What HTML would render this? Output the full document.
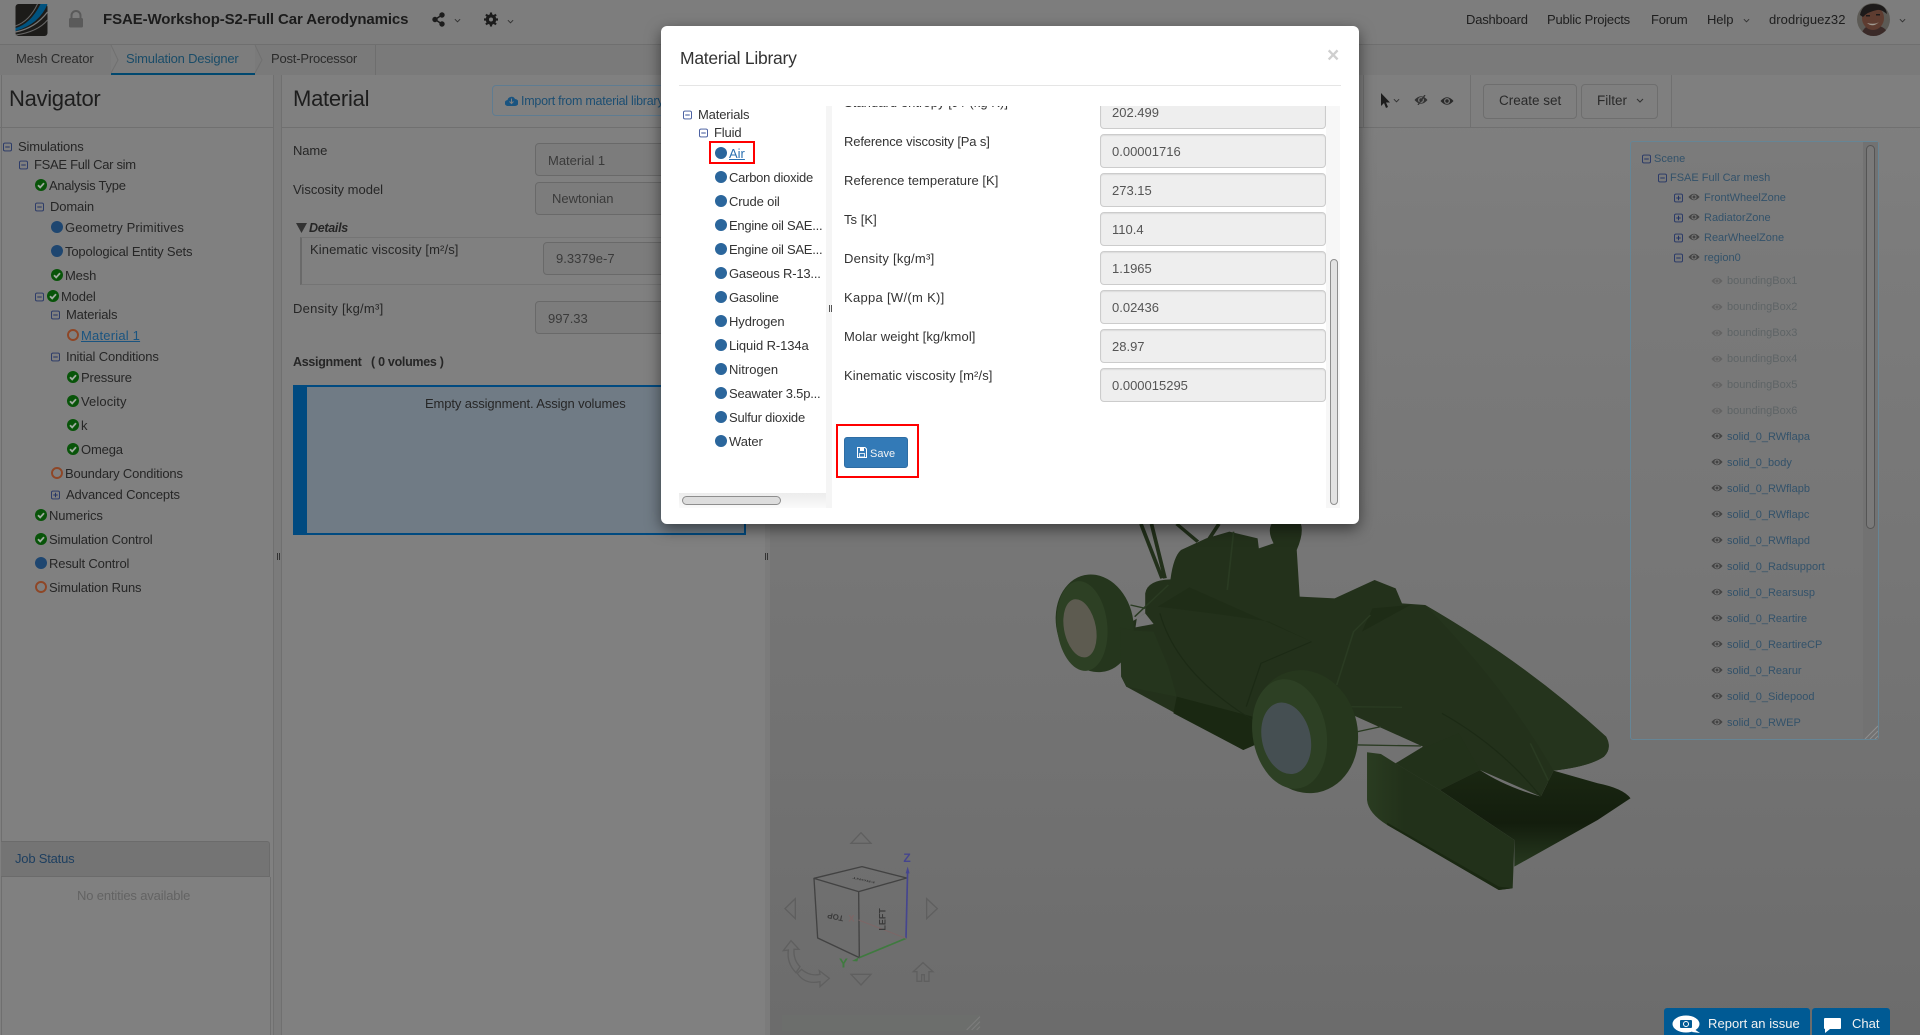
<!DOCTYPE html>
<html><head><meta charset="utf-8"><title>Material Library</title>
<style>
html,body{margin:0;padding:0;width:1920px;height:1035px;overflow:hidden;background:#808080;font-family:"Liberation Sans",sans-serif;font-size:13px;color:#262626}
.a{position:absolute}
.t{position:absolute;white-space:nowrap;line-height:16px;transform:translateY(calc(-50% + 1px))}
.n{letter-spacing:-.15px}
.i{position:absolute;transform:translateY(-50%)}
.inp{position:absolute;box-sizing:border-box;background:#7c7c7c;border:1px solid #696969;border-radius:4px}
.ro{position:absolute;box-sizing:border-box;left:1100px;width:226px;height:34px;background:#eee;border:1px solid #ccc;border-radius:4px;color:#555;line-height:34px;padding-left:11px;box-shadow:inset 0 1px 1px rgba(0,0,0,.075)}
.m{color:#333}
.e{color:#33526a;font-size:11px}
.g{color:#5e6466;font-size:11px}
.k{color:#1e1e1e}
</style></head><body>
<svg width="0" height="0" style="position:absolute">
<symbol id="chk" viewBox="0 0 12 12"><circle cx="6" cy="6" r="6" fill="#085409"/><path d="M3 6.200 5.200 8.400 9 4.200" fill="none" stroke="#a0aca0" stroke-width="1.800"/></symbol>
<symbol id="blu" viewBox="0 0 12 12"><circle cx="6" cy="6" r="6" fill="#1e4670"/></symbol>
<symbol id="blm" viewBox="0 0 12 12"><circle cx="6" cy="6" r="6" fill="#2b669c"/></symbol>
<symbol id="org" viewBox="0 0 12 12"><circle cx="6" cy="6" r="5" fill="none" stroke="#8e4626" stroke-width="1.900"/></symbol>
<symbol id="mn" viewBox="0 0 10 10"><rect x=".6" y=".6" width="8.800" height="8.800" rx="1.500" fill="none" stroke="#243566"/><path d="M2.500 5h5" stroke="#243566" stroke-width="1.100"/></symbol>
<symbol id="pl" viewBox="0 0 10 10"><rect x=".6" y=".6" width="8.800" height="8.800" rx="1.500" fill="none" stroke="#243566"/><path d="M2.500 5h5M5 2.500v5" stroke="#243566" stroke-width="1.100"/></symbol>
<symbol id="mnm" viewBox="0 0 10 10"><rect x=".6" y=".6" width="8.800" height="8.800" rx="1.500" fill="none" stroke="#3a5298"/><path d="M2.500 5h5" stroke="#3a5298" stroke-width="1.100"/></symbol>
<symbol id="eye" viewBox="0 0 14 10"><path d="M.5 5Q7-2.500 13.500 5 7 12.500.5 5Z" fill="currentColor"/><circle cx="7" cy="5" r="3" fill="#777"/><circle cx="7" cy="5" r="1.700" fill="currentColor"/></symbol>
<symbol id="car" viewBox="0 0 8 5"><path d="M1 1 4 4 7 1" fill="none" stroke="currentColor" stroke-width="1.100"/></symbol>
</svg>

<!-- header -->
<div class="a" style="left:0;top:0;width:1920px;height:44px;background:#7d7d7d;border-bottom:1px solid #6f6f6f"></div>
<svg class="a" style="left:15px;top:4px" width="33" height="32" viewBox="0 0 32 32"><rect width="32" height="32" rx="3" fill="#1c1b19"/><path d="M0 24Q15 20 25 0H32Q24 20 0 27Z" fill="#00527f"/><path d="M0 22Q14 17 22 0" fill="none" stroke="#666" stroke-width="1"/><path d="M0 28Q20 24 32 8" fill="none" stroke="#777" stroke-width="1.300"/><path d="M0 31Q22 28 32 16" fill="none" stroke="#666" stroke-width="1"/></svg>
<svg class="a" style="left:68px;top:10px" width="16" height="18" viewBox="0 0 16 18"><path d="M3.500 8V5.500a4.500 4.500 0 0 1 9 0V8" fill="none" stroke="#5a5a5a" stroke-width="2"/><rect x="1" y="8" width="14" height="9.500" rx="1.500" fill="#5a5a5a"/></svg>
<div class="t" style="left:103px;top:19px;font-size:15px;font-weight:bold;color:#1c1c1c;letter-spacing:-.1px">FSAE-Workshop-S2-Full Car Aerodynamics</div>
<svg class="a" style="left:432px;top:12px" width="13" height="15" viewBox="0 0 13 15" fill="#1c1c1c"><circle cx="3" cy="7.500" r="2.700"/><circle cx="10" cy="3" r="2.700"/><circle cx="10" cy="12" r="2.700"/><path d="M3 7.500 10 3M3 7.500 10 12" stroke="#1c1c1c" stroke-width="1.500"/></svg>
<svg class="a" style="left:454px;top:18px;color:#333" width="7" height="5"><use href="#car"/></svg>
<svg class="a" style="left:484px;top:12px" width="14" height="15" viewBox="0 0 14 14"><circle cx="7" cy="7" r="3.800" fill="none" stroke="#1c1c1c" stroke-width="3"/><path d="M7 0V14M0 7H14M2 2 12 12M12 2 2 12" stroke="#1c1c1c" stroke-width="2.200"/><circle cx="7" cy="7" r="2" fill="#7d7d7d"/></svg>
<svg class="a" style="left:507px;top:19px;color:#333" width="7" height="5"><use href="#car"/></svg>
<div class="t k" style="left:1466px;top:19px;letter-spacing:-.2px">Dashboard</div>
<div class="t k" style="left:1547px;top:19px;letter-spacing:-.2px">Public Projects</div>
<div class="t k" style="left:1651px;top:19px;letter-spacing:-.2px">Forum</div>
<div class="t k" style="left:1707px;top:19px;letter-spacing:-.1px">Help</div>
<svg class="a" style="left:1743px;top:18px;color:#333" width="7" height="5"><use href="#car"/></svg>
<div class="t k" style="left:1769px;top:19px;letter-spacing:.05px">drodriguez32</div>
<svg class="a" style="left:1857px;top:3px" width="33" height="33" viewBox="0 0 33 33"><defs><clipPath id="av"><circle cx="16.500" cy="16.500" r="16.500"/></clipPath></defs><g clip-path="url(#av)"><rect width="33" height="33" fill="#5c5a55"/><path d="M4 33Q6 24 12 23H22Q30 25 32 33Z" fill="#3a2a28"/><ellipse cx="16" cy="15" rx="11" ry="12" fill="#5e3c30"/><path d="M3 12Q5 1 16 1 29 1 30 11 24 6 20 7 10 9 6 14Z" fill="#1d1a1a"/><path d="M10 20Q16 25 22 19 18 22 10 20Z" fill="#a09a90"/><rect x="9" y="12" width="4" height="1.500" fill="#1d1a1a"/><rect x="19" y="11" width="4" height="1.500" fill="#1d1a1a"/></g></svg>
<svg class="a" style="left:1899px;top:18px;color:#333" width="7" height="5"><use href="#car"/></svg>

<!-- tabs -->
<div class="a" style="left:0;top:45px;width:1920px;height:30px;background:#7a7a7a"></div>
<div class="a" style="left:111px;top:45px;width:144px;height:28px;background:#7d7d7d;border-bottom:2px solid #00486f"></div>
<div class="a" style="left:375px;top:45px;width:1px;height:30px;background:#6e6e6e"></div>
<svg class="a" style="left:108px;top:45px" width="270" height="30" fill="none" stroke="#707070"><path d="M3 0 10 15 3 28M147 0 154 15 147 28"/></svg>
<div class="t" style="left:16px;top:58px;color:#2b2b2b;letter-spacing:-.1px">Mesh Creator</div>
<div class="t" style="left:126px;top:58px;color:#1a4c68;letter-spacing:-.2px">Simulation Designer</div>
<div class="t" style="left:271px;top:58px;color:#2b2b2b;letter-spacing:-.2px">Post-Processor</div>

<!-- panels -->
<div class="a" style="left:1px;top:75px;width:272px;height:960px;background:#808080;border-left:1px solid #6f6f6f;box-sizing:border-box"></div>
<div class="a" style="left:273px;top:75px;width:9px;height:960px;background:#7b7b7b;border-left:1px solid #707070;border-right:1px solid #707070;box-sizing:border-box"></div>
<div class="a" style="left:282px;top:75px;width:483px;height:960px;background:#808080"></div>
<div class="a" style="left:765px;top:75px;width:5px;height:960px;background:#7b7b7b"></div>
<div class="a" style="left:0;top:127px;width:273px;height:1px;background:#707070"></div>
<div class="a" style="left:282px;top:127px;width:483px;height:1px;background:#707070"></div>
<div class="a" style="left:277px;top:553px;width:1px;height:7px;background:#333;box-shadow:2px 0 0 #333"></div>
<div class="a" style="left:765px;top:553px;width:1px;height:7px;background:#333;box-shadow:2px 0 0 #333"></div>
<div class="t" style="left:9px;top:98px;font-size:22px;line-height:28px;color:#1d1d1d;letter-spacing:-.3px">Navigator</div>
<div class="t" style="left:293px;top:98px;font-size:22px;line-height:28px;color:#1d1d1d;letter-spacing:-.25px">Material</div>

<!-- nav tree -->
<svg class="i" style="left:3px;top:147px" width="9" height="9"><use href="#mn"/></svg><div class="t n" style="left:18px;top:146px">Simulations</div>
<svg class="i" style="left:19px;top:165px" width="9" height="9"><use href="#mn"/></svg><div class="t n" style="left:34px;top:164px;letter-spacing:-.3px">FSAE Full Car sim</div>
<svg class="i" style="left:35px;top:185px" width="12" height="12"><use href="#chk"/></svg><div class="t n" style="left:49px;top:185px;letter-spacing:-.25px">Analysis Type</div>
<svg class="i" style="left:35px;top:207px" width="9" height="9"><use href="#mn"/></svg><div class="t n" style="left:50px;top:206px">Domain</div>
<svg class="i" style="left:51px;top:227px" width="12" height="12"><use href="#blu"/></svg><div class="t n" style="left:65px;top:227px;letter-spacing:.1px">Geometry Primitives</div>
<svg class="i" style="left:51px;top:251px" width="12" height="12"><use href="#blu"/></svg><div class="t n" style="left:65px;top:251px">Topological Entity Sets</div>
<svg class="i" style="left:51px;top:275px" width="12" height="12"><use href="#chk"/></svg><div class="t n" style="left:65px;top:275px">Mesh</div>
<svg class="i" style="left:35px;top:297px" width="9" height="9"><use href="#mn"/></svg><svg class="i" style="left:47px;top:296px" width="12" height="12"><use href="#chk"/></svg><div class="t n" style="left:61px;top:296px">Model</div>
<svg class="i" style="left:51px;top:315px" width="9" height="9"><use href="#mn"/></svg><div class="t n" style="left:66px;top:314px">Materials</div>
<svg class="i" style="left:67px;top:335px" width="12" height="12"><use href="#org"/></svg><div class="t" style="left:81px;top:335px;letter-spacing:.2px;color:#1a5480;text-decoration:underline">Material 1</div>
<svg class="i" style="left:51px;top:357px" width="9" height="9"><use href="#mn"/></svg><div class="t n" style="left:66px;top:356px">Initial Conditions</div>
<svg class="i" style="left:67px;top:377px" width="12" height="12"><use href="#chk"/></svg><div class="t n" style="left:81px;top:377px">Pressure</div>
<svg class="i" style="left:67px;top:401px" width="12" height="12"><use href="#chk"/></svg><div class="t n" style="left:81px;top:401px;letter-spacing:.1px">Velocity</div>
<svg class="i" style="left:67px;top:425px" width="12" height="12"><use href="#chk"/></svg><div class="t" style="left:81px;top:425px">k</div>
<svg class="i" style="left:67px;top:449px" width="12" height="12"><use href="#chk"/></svg><div class="t n" style="left:81px;top:449px">Omega</div>
<svg class="i" style="left:51px;top:473px" width="12" height="12"><use href="#org"/></svg><div class="t n" style="left:65px;top:473px">Boundary Conditions</div>
<svg class="i" style="left:51px;top:495px" width="9" height="9"><use href="#pl"/></svg><div class="t n" style="left:66px;top:494px">Advanced Concepts</div>
<svg class="i" style="left:35px;top:515px" width="12" height="12"><use href="#chk"/></svg><div class="t n" style="left:49px;top:515px">Numerics</div>
<svg class="i" style="left:35px;top:539px" width="12" height="12"><use href="#chk"/></svg><div class="t n" style="left:49px;top:539px">Simulation Control</div>
<svg class="i" style="left:35px;top:563px" width="12" height="12"><use href="#blu"/></svg><div class="t n" style="left:49px;top:563px">Result Control</div>
<svg class="i" style="left:35px;top:587px" width="12" height="12"><use href="#org"/></svg><div class="t n" style="left:49px;top:587px">Simulation Runs</div>

<!-- job status -->
<div class="a" style="left:1px;top:841px;width:269px;height:36px;box-sizing:border-box;background:#747474;border:1px solid #6b6b6b;border-left:0;border-radius:0 3px 0 0"></div>
<div class="a" style="left:270px;top:877px;width:1px;height:158px;background:#6f6f6f"></div>
<div class="t" style="left:15px;top:858px;color:#1e3f60;letter-spacing:-.2px">Job Status</div>
<div class="t" style="left:77px;top:895px;color:#636363;letter-spacing:-.15px">No entities available</div>

<!-- material form -->
<div class="a" style="left:492px;top:85px;width:200px;height:31px;box-sizing:border-box;border:1px solid #5f7c91;border-radius:4px"></div>
<svg class="a" style="left:505px;top:95px" width="13" height="11" viewBox="0 0 13 11"><path d="M3 11A3 3 0 0 1 2.500 5 4 4 0 0 1 10 4 3.500 3.500 0 0 1 10 11Z" fill="#1a5480"/><path d="M6.500 3.500V8M4.500 6.500 6.500 8.500 8.500 6.500" stroke="#808080" fill="none"/></svg>
<div class="t" style="left:521px;top:100px;color:#1c4e72;letter-spacing:-.25px;font-size:12.500px">Import from material library</div>
<div class="t" style="left:293px;top:150px;letter-spacing:-.1px">Name</div>
<div class="inp" style="left:535px;top:143px;width:160px;height:33px"></div><div class="t" style="left:548px;top:160px;color:#3a3a3a">Material 1</div>
<div class="t" style="left:293px;top:189px">Viscosity model</div>
<div class="inp" style="left:535px;top:182px;width:160px;height:33px"></div><div class="t" style="left:552px;top:198px;color:#3a3a3a">Newtonian</div>
<svg class="a" style="left:296px;top:223px" width="11" height="10"><path d="M0 0H11L5.500 10Z" fill="#333"/></svg>
<div class="t" style="left:309px;top:227px;font-style:italic;font-weight:bold;font-size:12.500px;letter-spacing:-.3px">Details</div>
<div class="a" style="left:300px;top:237px;width:400px;height:48px;box-sizing:border-box;border-left:2px solid #6a6a6a;border-top:1px solid #747474;border-bottom:1px solid #747474"></div>
<div class="t" style="left:310px;top:249px;letter-spacing:.1px">Kinematic viscosity [m²/s]</div>
<div class="inp" style="left:543px;top:242px;width:160px;height:33px"></div><div class="t" style="left:556px;top:258px;color:#3a3a3a">9.3379e-7</div>
<div class="t" style="left:293px;top:308px;letter-spacing:.25px">Density [kg/m³]</div>
<div class="inp" style="left:535px;top:301px;width:160px;height:33px"></div><div class="t" style="left:548px;top:318px;color:#3a3a3a">997.33</div>
<div class="t" style="left:293px;top:361px;font-weight:bold;letter-spacing:-.3px;font-size:12.500px">Assignment &nbsp; ( 0 volumes )</div>
<div class="a" style="left:293px;top:385px;width:453px;height:150px;box-sizing:border-box;background:#707b85;border:2px solid #004a80;border-left-width:14px"></div>
<div class="t" style="left:425px;top:403px;letter-spacing:-.12px">Empty assignment. Assign volumes</div>

<!-- viewport -->
<div class="a" style="left:770px;top:75px;width:1150px;height:960px;background:linear-gradient(#808080 0%,#7b7b7b 20%,#767676 50%,#6c6c6c 100%)"></div>
<div class="a" style="left:770px;top:75px;width:1150px;height:52px;background:#7f7f7f;border-bottom:1px solid #707070;box-sizing:content-box"></div>
<div class="a" style="left:1363px;top:75px;width:1px;height:52px;background:#707070"></div>
<div class="a" style="left:1470px;top:75px;width:1px;height:52px;background:#707070"></div>
<div class="a" style="left:1671px;top:75px;width:1px;height:52px;background:#707070"></div>
<svg class="a" style="left:1380px;top:93px" width="10" height="15" viewBox="0 0 10 15"><path d="M1 0V13L4 10 6 15 8 14 6 9.500H10Z" fill="#1c1c1c"/></svg>
<svg class="a" style="left:1393px;top:98px;color:#333" width="7" height="5"><use href="#car"/></svg>
<svg class="a" style="left:1414px;top:95px;color:#333" width="14" height="10"><use href="#eye"/><path d="M11 0 4 10" stroke="#333" stroke-width="1.300"/></svg>
<svg class="a" style="left:1440px;top:96px;color:#2a2a2a" width="14" height="10"><use href="#eye"/></svg>
<div class="a" style="left:1483px;top:84px;width:94px;height:35px;box-sizing:border-box;border:1px solid #6e6e6e;border-radius:4px"></div>
<div class="t" style="left:1499px;top:100px;font-size:13.500px;color:#2a2a2a">Create set</div>
<div class="a" style="left:1581px;top:84px;width:77px;height:35px;box-sizing:border-box;border:1px solid #6e6e6e;border-radius:4px"></div>
<div class="t" style="left:1597px;top:100px;font-size:13.500px;color:#2a2a2a">Filter</div>
<svg class="a" style="left:1636px;top:98px;color:#333" width="8" height="5"><use href="#car"/></svg>

<!-- car -->
<svg class="a" style="left:0;top:0" width="1920" height="1035">
<defs>
<linearGradient id="wg" x1="0" y1="0" x2="0" y2="1"><stop offset="0" stop-color="#1a2712"/><stop offset=".55" stop-color="#131d0d"/><stop offset="1" stop-color="#27391f"/></linearGradient>
<linearGradient id="ep" x1="0" y1="0" x2="1" y2="0"><stop offset="0" stop-color="#2a3c21"/><stop offset=".25" stop-color="#22311a"/><stop offset="1" stop-color="#22311a"/></linearGradient>
</defs>
<g transform="translate(1000 500) scale(.4209 .3333)">
<path d="M335 72 385 235M360 72 392 235M420 72 470 125M520 72 495 120" stroke="#22301a" stroke-width="9" fill="none"/>
<!-- silhouette -->
<path d="M288 385 345 340 345 280Q350 240 405 238 412 170 430 150L490 115 545 95 612 115 615 145 650 130Q635 95 645 72L715 72Q722 100 705 150L712 290 795 295 890 240 940 265 955 310 1010 315Q1250 490 1440 710 1455 745 1435 770 1400 800 1315 812L1285 890 1140 810 1045 870 940 790 1005 740 838 645 700 650 605 735 578 750 300 560 288 530Z" fill="#23311b"/>
<!-- sidepod upper shading -->
<path d="M375 320 450 262 740 425 640 365Q540 345 375 320Z" fill="#1f2d17"/>
<path d="M420 590 600 650 605 735 578 750 412 640Z" fill="#1a2812"/>
<path d="M1010 315Q1250 490 1440 710 1455 745 1435 770 1400 800 1315 812 1200 560 1010 315Z" fill="#25341d"/>
<path d="M860 395 975 315 885 325Z" fill="#1e2c16"/>
<path d="M740 425 620 490 585 620M1050 640Q1190 740 1285 890M380 340Q420 520 600 660" stroke="#1c2a15" stroke-width="3" fill="none"/>
<path d="M835 620 955 622M850 695 905 680M850 735 1000 738M800 555 840 395 880 345M1260 730 1325 900M540 270 555 95M310 315 345 325M320 350 400 255" stroke="#2a3b22" stroke-width="4" fill="none"/>
<!-- rear wheel -->
<ellipse cx="225" cy="370" rx="92" ry="147" transform="rotate(-6 225 370)" fill="#25361d"/>
<ellipse cx="195" cy="378" rx="60" ry="135" transform="rotate(-4 195 378)" fill="#2d4024"/>
<ellipse cx="190" cy="385" rx="38" ry="88" transform="rotate(-8 190 385)" fill="#5d5b50"/>
<path d="M325 355 345 340 365 372 322 382Z" fill="#767676"/>
<path d="M285 382 320 392 365 395 400 500 420 590 300 560 288 530Z" fill="#25351d"/>
<!-- front wheel -->
<ellipse cx="725" cy="695" rx="125" ry="185" transform="rotate(-6 725 695)" fill="#26371d"/>
<ellipse cx="688" cy="702" rx="88" ry="165" transform="rotate(-6 688 702)" fill="#2d4024"/>
<ellipse cx="680" cy="715" rx="58" ry="108" transform="rotate(-8 680 715)" fill="#454f52"/>
<!-- wing -->
<path d="M1045 870 1140 810Q1200 860 1285 890L1315 812 1420 850Q1480 865 1498 895L1420 960 1222 1100 1222 1020Z" fill="url(#wg)"/>
<path d="M940 790 1005 745 1090 700 1140 810 1045 870Z" fill="#22311a"/>
<path d="M872 757 905 762 940 790 1045 870 1222 1020 1220 1100 1218 1165 1185 1170 920 975Q875 940 872 900Z" fill="url(#ep)"/>
<path d="M920 968 1185 1160 1218 1165 1185 1170 920 975Z" fill="#1a2812"/>
</g>
<!-- cube -->
<g transform="translate(740 810) scale(.3333)">
<g fill="none" stroke="#424242" stroke-width="4" stroke-linejoin="round">
<path d="M222 205 366 170 500 204 356 245Z"/><path d="M222 205 233 384 358 443 356 245"/>
</g>
<path d="M358 443 498 385" stroke="#3f7a3f" stroke-width="5" fill="none"/>
<path d="M498 385 503 180" stroke="#45458f" stroke-width="5" fill="none"/>
<path d="M503 170 497 190H509Z" fill="#45458f"/>
<path d="M336 453 356 442 352 454Z" fill="#3f7a3f"/>
<path d="M498 385 356 330" stroke="#7d6666" stroke-width="3" fill="none"/>
<text x="490" y="156" font-family="Liberation Sans,sans-serif" font-size="36" font-weight="bold" fill="#45458f">Z</text>
<text x="297" y="472" font-family="Liberation Sans,sans-serif" font-size="40" font-weight="bold" fill="#3f7a3f">Y</text>
<text x="325" y="334" font-family="Liberation Sans,sans-serif" font-size="28" font-weight="bold" fill="#7d6666">X</text>
<text transform="rotate(-90 437 362)" x="437" y="362" font-family="Liberation Sans,sans-serif" font-size="27" font-weight="bold" fill="#3a3a3a">LEFT</text>
<text transform="rotate(192 312 318)" x="312" y="318" font-family="Liberation Sans,sans-serif" font-size="24" font-weight="bold" fill="#3a3a3a">TOP</text>
<text transform="rotate(192 405 215) scale(1 .4)" x="405" y="538" font-family="Liberation Sans,sans-serif" font-size="20" font-weight="bold" fill="#3a3a3a">FRONT</text>
<g fill="none" stroke="#5f5f5f" stroke-width="4">
<path d="M333 100 363 68 393 100Z"/><path d="M333 493 393 493 363 525Z"/><path d="M166 266 135 296 166 326Z"/><path d="M560 266 592 296 560 326Z"/>
<path d="M520 485 549 458 579 485H567V514H553V494H545V514H531V485Z"/>
<path d="M130 422 153 392 177 418H162Q160 450 180 470L168 488Q140 460 145 420Z"/>
<path d="M172 490 185 478Q210 500 240 493L238 482 268 505 240 530 240 515Q195 525 172 490Z"/>
</g>
<rect x="125" y="615" width="595" height="48" fill="#6d756d" opacity=".25"/>
<path d="M680 660 720 620M695 660 720 635M710 660 720 650" stroke="#7e7e7e" stroke-width="3"/>
</g>
</svg>

<!-- scene tree -->
<div class="a" style="left:1630px;top:141px;width:249px;height:599px;box-sizing:border-box;border:1px solid #668595;border-radius:3px;background:rgba(120,120,120,.5)"></div>
<div class="a" style="left:1863px;top:142px;width:15px;height:597px;background:#727272"></div>
<div class="a" style="left:1866px;top:145px;width:9px;height:384px;box-sizing:border-box;border:1px solid #555;border-radius:5px;background:#7a7a7a"></div>
<svg class="a" style="left:1863px;top:724px" width="15" height="15" stroke="#909090"><path d="M2 15 15 2M7 15 15 7M12 15 15 12"/></svg>
<svg class="i" style="left:1642px;top:159px" width="9" height="9"><use href="#mn"/></svg><div class="t e" style="left:1654px;top:158px">Scene</div>
<svg class="i" style="left:1658px;top:178px" width="9" height="9"><use href="#mn"/></svg><div class="t e" style="left:1670px;top:177px">FSAE Full Car mesh</div>
<svg class="i" style="left:1674px;top:198px" width="9" height="9"><use href="#pl"/></svg><svg class="i" style="left:1688px;top:197px;color:#444" width="12" height="9"><use href="#eye"/></svg><div class="t e" style="left:1704px;top:197px">FrontWheelZone</div>
<svg class="i" style="left:1674px;top:218px" width="9" height="9"><use href="#pl"/></svg><svg class="i" style="left:1688px;top:217px;color:#444" width="12" height="9"><use href="#eye"/></svg><div class="t e" style="left:1704px;top:217px">RadiatorZone</div>
<svg class="i" style="left:1674px;top:238px" width="9" height="9"><use href="#pl"/></svg><svg class="i" style="left:1688px;top:237px;color:#444" width="12" height="9"><use href="#eye"/></svg><div class="t e" style="left:1704px;top:237px">RearWheelZone</div>
<svg class="i" style="left:1674px;top:258px" width="9" height="9"><use href="#mn"/></svg><svg class="i" style="left:1688px;top:257px;color:#444" width="12" height="9"><use href="#eye"/></svg><div class="t e" style="left:1704px;top:257px">region0</div>
<svg class="i" style="left:1711px;top:281px;color:#636363" width="12" height="9"><use href="#eye"/></svg><div class="t g" style="left:1727px;top:280px">boundingBox1</div>
<svg class="i" style="left:1711px;top:307px;color:#636363" width="12" height="9"><use href="#eye"/></svg><div class="t g" style="left:1727px;top:306px">boundingBox2</div>
<svg class="i" style="left:1711px;top:333px;color:#636363" width="12" height="9"><use href="#eye"/></svg><div class="t g" style="left:1727px;top:332px">boundingBox3</div>
<svg class="i" style="left:1711px;top:359px;color:#636363" width="12" height="9"><use href="#eye"/></svg><div class="t g" style="left:1727px;top:358px">boundingBox4</div>
<svg class="i" style="left:1711px;top:385px;color:#636363" width="12" height="9"><use href="#eye"/></svg><div class="t g" style="left:1727px;top:384px">boundingBox5</div>
<svg class="i" style="left:1711px;top:411px;color:#636363" width="12" height="9"><use href="#eye"/></svg><div class="t g" style="left:1727px;top:410px">boundingBox6</div>
<svg class="i" style="left:1711px;top:436px;color:#444" width="12" height="9"><use href="#eye"/></svg><div class="t e" style="left:1727px;top:436px">solid_0_RWflapa</div>
<svg class="i" style="left:1711px;top:462px;color:#444" width="12" height="9"><use href="#eye"/></svg><div class="t e" style="left:1727px;top:462px">solid_0_body</div>
<svg class="i" style="left:1711px;top:488px;color:#444" width="12" height="9"><use href="#eye"/></svg><div class="t e" style="left:1727px;top:488px">solid_0_RWflapb</div>
<svg class="i" style="left:1711px;top:514px;color:#444" width="12" height="9"><use href="#eye"/></svg><div class="t e" style="left:1727px;top:514px">solid_0_RWflapc</div>
<svg class="i" style="left:1711px;top:540px;color:#444" width="12" height="9"><use href="#eye"/></svg><div class="t e" style="left:1727px;top:540px">solid_0_RWflapd</div>
<svg class="i" style="left:1711px;top:566px;color:#444" width="12" height="9"><use href="#eye"/></svg><div class="t e" style="left:1727px;top:566px">solid_0_Radsupport</div>
<svg class="i" style="left:1711px;top:592px;color:#444" width="12" height="9"><use href="#eye"/></svg><div class="t e" style="left:1727px;top:592px">solid_0_Rearsusp</div>
<svg class="i" style="left:1711px;top:618px;color:#444" width="12" height="9"><use href="#eye"/></svg><div class="t e" style="left:1727px;top:618px">solid_0_Reartire</div>
<svg class="i" style="left:1711px;top:644px;color:#444" width="12" height="9"><use href="#eye"/></svg><div class="t e" style="left:1727px;top:644px">solid_0_ReartireCP</div>
<svg class="i" style="left:1711px;top:670px;color:#444" width="12" height="9"><use href="#eye"/></svg><div class="t e" style="left:1727px;top:670px">solid_0_Rearur</div>
<svg class="i" style="left:1711px;top:696px;color:#444" width="12" height="9"><use href="#eye"/></svg><div class="t e" style="left:1727px;top:696px">solid_0_Sidepood</div>
<svg class="i" style="left:1711px;top:722px;color:#444" width="12" height="9"><use href="#eye"/></svg><div class="t e" style="left:1727px;top:722px">solid_0_RWEP</div>

<!-- bottom buttons -->
<div class="a" style="left:1664px;top:1008px;width:146px;height:27px;background:#005a94;border-radius:3px 3px 0 0"></div>
<div class="a" style="left:1812px;top:1008px;width:78px;height:27px;background:#005a94;border-radius:3px 3px 0 0"></div>
<svg class="a" style="left:1672px;top:1015px" width="29" height="19" viewBox="0 0 29 19"><ellipse cx="14" cy="9" rx="13.500" ry="8.500" fill="#fff"/><path d="M22 14 28 18 20 17Z" fill="#fff"/><rect x="8" y="5" width="12" height="8" rx="1" fill="#005a94"/><circle cx="14" cy="9" r="2.500" fill="none" stroke="#fff"/></svg>
<div class="t" style="left:1708px;top:1023px;color:#f2f2f2;letter-spacing:.05px">Report an issue</div>
<svg class="a" style="left:1824px;top:1018px" width="17" height="15" viewBox="0 0 17 15"><path d="M1 0H16Q17 0 17 1V10Q17 11 16 11H6L1 15V11Q0 11 0 10V1Q0 0 1 0Z" fill="#fff"/></svg>
<div class="t" style="left:1852px;top:1023px;color:#f2f2f2">Chat</div>

<!-- modal -->
<div class="a" style="left:661px;top:26px;width:698px;height:498px;background:#fff;border-radius:6px;box-shadow:0 5px 15px rgba(0,0,0,.5)"></div>
<div class="t m" style="left:680px;top:57px;font-size:17.500px;line-height:22px;letter-spacing:-.25px">Material Library</div>
<div class="t" style="left:1327px;top:55px;font-size:21px;font-weight:bold;color:#cfcfcf;line-height:22px">×</div>
<div class="a" style="left:679px;top:85px;width:662px;height:1px;background:#e5e5e5"></div>
<div class="a" style="left:826px;top:106px;width:6px;height:402px;background:#f5f5f5"></div>
<div class="a" style="left:829px;top:305px;width:1px;height:7px;background:#555;box-shadow:2px 0 0 #555"></div>

<svg class="i" style="left:683px;top:115px" width="9" height="9"><use href="#mnm"/></svg><div class="t m" style="left:698px;top:114px;letter-spacing:-.15px">Materials</div>
<svg class="i" style="left:699px;top:133px" width="9" height="9"><use href="#mnm"/></svg><div class="t m" style="left:714px;top:132px;letter-spacing:-.15px">Fluid</div>
<div class="a" style="left:709px;top:141px;width:46px;height:23px;box-sizing:border-box;border:2px solid #f00"></div>
<svg class="i" style="left:715px;top:153px" width="12" height="12"><use href="#blm"/></svg><div class="t" style="left:729px;top:153px;color:#2a6fb0;text-decoration:underline">Air</div>
<svg class="i" style="left:715px;top:177px" width="12" height="12"><use href="#blm"/></svg><div class="t m" style="left:729px;top:177px;letter-spacing:-.25px">Carbon dioxide</div>
<svg class="i" style="left:715px;top:201px" width="12" height="12"><use href="#blm"/></svg><div class="t m" style="left:729px;top:201px;letter-spacing:-.15px">Crude oil</div>
<svg class="i" style="left:715px;top:225px" width="12" height="12"><use href="#blm"/></svg><div class="t m" style="left:729px;top:225px;letter-spacing:-.25px">Engine oil SAE...</div>
<svg class="i" style="left:715px;top:249px" width="12" height="12"><use href="#blm"/></svg><div class="t m" style="left:729px;top:249px;letter-spacing:-.25px">Engine oil SAE...</div>
<svg class="i" style="left:715px;top:273px" width="12" height="12"><use href="#blm"/></svg><div class="t m" style="left:729px;top:273px;letter-spacing:-.2px">Gaseous R-13...</div>
<svg class="i" style="left:715px;top:297px" width="12" height="12"><use href="#blm"/></svg><div class="t m" style="left:729px;top:297px;letter-spacing:-.2px">Gasoline</div>
<svg class="i" style="left:715px;top:321px" width="12" height="12"><use href="#blm"/></svg><div class="t m" style="left:729px;top:321px;letter-spacing:-.1px">Hydrogen</div>
<svg class="i" style="left:715px;top:345px" width="12" height="12"><use href="#blm"/></svg><div class="t m" style="left:729px;top:345px;letter-spacing:-.1px">Liquid R-134a</div>
<svg class="i" style="left:715px;top:369px" width="12" height="12"><use href="#blm"/></svg><div class="t m" style="left:729px;top:369px;letter-spacing:0">Nitrogen</div>
<svg class="i" style="left:715px;top:393px" width="12" height="12"><use href="#blm"/></svg><div class="t m" style="left:729px;top:393px;letter-spacing:-.2px">Seawater 3.5p...</div>
<svg class="i" style="left:715px;top:417px" width="12" height="12"><use href="#blm"/></svg><div class="t m" style="left:729px;top:417px;letter-spacing:-.2px">Sulfur dioxide</div>
<svg class="i" style="left:715px;top:441px" width="12" height="12"><use href="#blm"/></svg><div class="t m" style="left:729px;top:441px;letter-spacing:-.1px">Water</div>
<div class="a" style="left:679px;top:493px;width:147px;height:15px;background:linear-gradient(#ececec,#fafafa)"></div>
<div class="a" style="left:682px;top:496px;width:99px;height:9px;box-sizing:border-box;background:#ddd;border:1px solid #8e8e8e;border-radius:5px"></div>

<!-- modal form, clipped -->
<div class="a" style="left:832px;top:106px;width:508px;height:402px;overflow:hidden">
<div class="a" style="left:0;top:0;width:1000px;height:1000px;transform:translate(-832px,-106px)">
<div class="t m" style="left:844px;top:102px;letter-spacing:.05px">Standard entropy [J / (kg K)]</div>
<div class="ro" style="top:95px">202.499</div>
<div class="t m" style="left:844px;top:141px;letter-spacing:-.15px">Reference viscosity [Pa s]</div><div class="ro" style="top:134px">0.00001716</div>
<div class="t m" style="left:844px;top:180px;letter-spacing:.05px">Reference temperature [K]</div><div class="ro" style="top:173px">273.15</div>
<div class="t m" style="left:844px;top:219px;letter-spacing:.05px">Ts [K]</div><div class="ro" style="top:212px">110.4</div>
<div class="t m" style="left:844px;top:258px;letter-spacing:.25px">Density [kg/m³]</div><div class="ro" style="top:251px">1.1965</div>
<div class="t m" style="left:844px;top:297px;letter-spacing:.3px">Kappa [W/(m K)]</div><div class="ro" style="top:290px">0.02436</div>
<div class="t m" style="left:844px;top:336px;letter-spacing:.1px">Molar weight [kg/kmol]</div><div class="ro" style="top:329px">28.97</div>
<div class="t m" style="left:844px;top:375px;letter-spacing:.1px">Kinematic viscosity [m²/s]</div><div class="ro" style="top:368px">0.000015295</div>
</div></div>
<div class="a" style="left:836px;top:424px;width:83px;height:54px;box-sizing:border-box;border:2px solid #f00"></div>
<div class="a" style="left:844px;top:437px;width:64px;height:31px;box-sizing:border-box;background:#337ab7;border:1px solid #2e6da4;border-radius:3px"></div>
<svg class="a" style="left:857px;top:447px" width="10" height="11" viewBox="0 0 10 11"><path d="M.5.500H8L9.500 2V10.500H.5Z" fill="none" stroke="#fff"/><rect x="3" y="1" width="4" height="3" fill="#fff"/><rect x="2.500" y="6.500" width="5" height="3.500" fill="none" stroke="#fff" stroke-width=".8"/></svg>
<div class="t" style="left:870px;top:453px;color:#f4f4f4;font-size:11px">Save</div>
<div class="a" style="left:1326px;top:106px;width:14px;height:402px;background:#f7f7f7"></div>
<div class="a" style="left:1330px;top:259px;width:8px;height:246px;box-sizing:border-box;background:#e2e2e2;border:1px solid #8e8e8e;border-radius:5px"></div>
</body></html>
